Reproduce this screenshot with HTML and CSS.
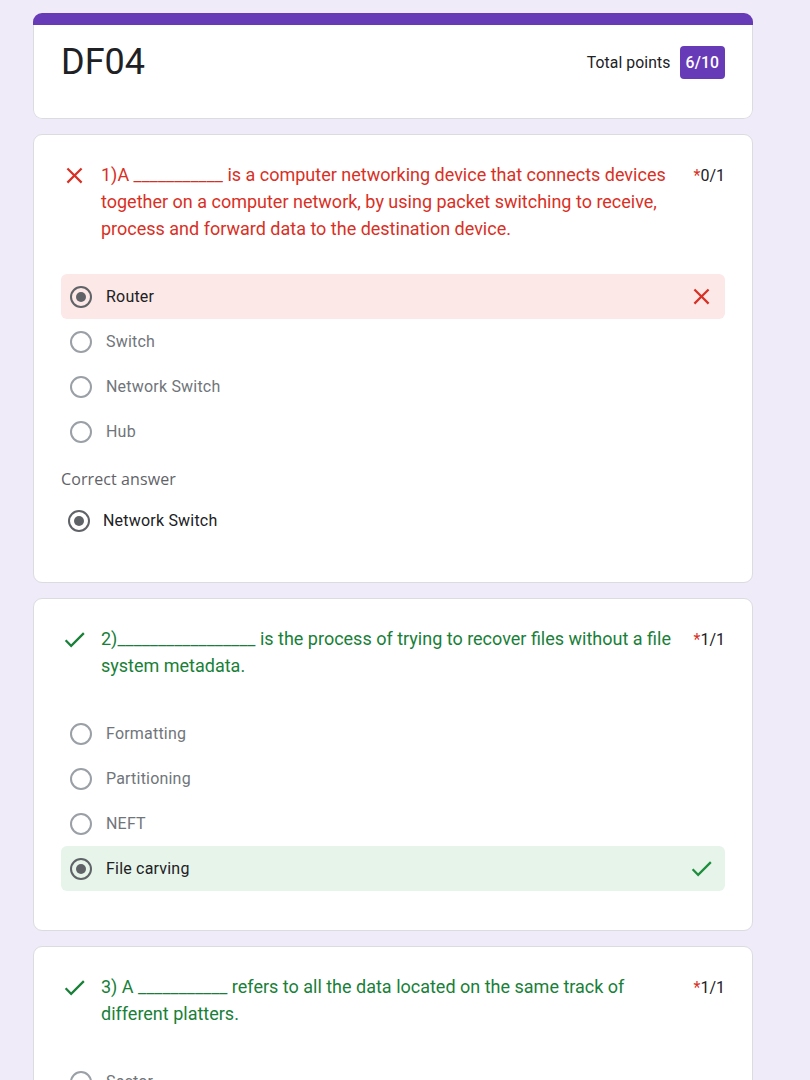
FILE: index.html
```html
<!DOCTYPE html>
<html lang="en">
<head>
<meta charset="utf-8">
<title>DF04</title>
<link rel="stylesheet" href="styles.css">
</head>
<body>
<div class="page">
  <div class="header">
    <div class="header-bar"></div>
    <div class="header-body">
      <h1 class="title">DF04</h1>
      <div class="total">Total points <span class="badge">6/10</span></div>
    </div>
  </div>

  <div class="card">
    <div class="q-head wrong">
      <span class="q-icon"><svg viewBox="0 0 24 24" width="27" height="27"><path fill="currentColor" d="M19 6.41L17.59 5 12 10.59 6.41 5 5 6.41 10.59 12 5 17.59 6.41 19 12 13.41 17.59 19 19 17.59 13.41 12z"/></svg></span>
      <div class="q-text">1)A ___________ is a computer networking device that connects devices together on a computer network, by using packet switching to receive, process and forward data to the destination device.</div>
      <div class="q-points"><span class="req">*</span>0/1</div>
    </div>
    <div class="options">
      <div class="option selected bad"><span class="radio checked"></span><span class="opt-label">Router</span><span class="opt-mark bad-mark"><svg viewBox="0 0 24 24" width="27" height="27"><path fill="currentColor" d="M19 6.41L17.59 5 12 10.59 6.41 5 5 6.41 10.59 12 5 17.59 6.41 19 12 13.41 17.59 19 19 17.59 13.41 12z"/></svg></span></div>
      <div class="option"><span class="radio"></span><span class="opt-label">Switch</span></div>
      <div class="option"><span class="radio"></span><span class="opt-label">Network Switch</span></div>
      <div class="option"><span class="radio"></span><span class="opt-label">Hub</span></div>
    </div>
    <div class="correct-label">Correct answer</div>
    <div class="option selected answer"><span class="radio checked"></span><span class="opt-label">Network Switch</span></div>
  </div>

  <div class="card">
    <div class="q-head right">
      <span class="q-icon"><svg viewBox="0 0 24 24" width="27" height="27"><path fill="currentColor" d="M9 16.17L4.83 12l-1.42 1.41L9 19 21 7l-1.41-1.41z"/></svg></span>
      <div class="q-text">2)_________________ is the process of trying to recover files without a file system metadata.</div>
      <div class="q-points"><span class="req">*</span>1/1</div>
    </div>
    <div class="options">
      <div class="option"><span class="radio"></span><span class="opt-label">Formatting</span></div>
      <div class="option"><span class="radio"></span><span class="opt-label">Partitioning</span></div>
      <div class="option"><span class="radio"></span><span class="opt-label">NEFT</span></div>
      <div class="option selected good"><span class="radio checked"></span><span class="opt-label">File carving</span><span class="opt-mark good-mark"><svg viewBox="0 0 24 24" width="27" height="27"><path fill="currentColor" d="M9 16.17L4.83 12l-1.42 1.41L9 19 21 7l-1.41-1.41z"/></svg></span></div>
    </div>
  </div>

  <div class="card">
    <div class="q-head right">
      <span class="q-icon"><svg viewBox="0 0 24 24" width="27" height="27"><path fill="currentColor" d="M9 16.17L4.83 12l-1.42 1.41L9 19 21 7l-1.41-1.41z"/></svg></span>
      <div class="q-text">3) A ___________ refers to all the data located on the same track of different platters.</div>
      <div class="q-points"><span class="req">*</span>1/1</div>
    </div>
    <div class="options">
      <div class="option"><span class="radio"></span><span class="opt-label">Sector</span></div>
      <div class="option"><span class="radio"></span><span class="opt-label">Cluster</span></div>
      <div class="option selected good"><span class="radio checked"></span><span class="opt-label">Cylinder</span><span class="opt-mark good-mark"><svg viewBox="0 0 24 24" width="27" height="27"><path fill="currentColor" d="M9 16.17L4.83 12l-1.42 1.41L9 19 21 7l-1.41-1.41z"/></svg></span></div>
      <div class="option"><span class="radio"></span><span class="opt-label">Track</span></div>
    </div>
  </div>
</div>
</body>
</html>
```

FILE: styles.css
```css
* { box-sizing: border-box; }

html, body {
  margin: 0;
  background: #f0ebf8;
  font-family: Roboto, "Liberation Sans", Arial, sans-serif;
  color: #202124;
}

.page {
  width: 720px;
  margin-left: 33px;
  padding-top: 13px;
  padding-bottom: 20px;
}

.header {
  border-radius: 9px;
  overflow: hidden;
}

.header-bar {
  height: 12px;
  background: #673ab7;
}

.header-body {
  background: #fff;
  border: 1px solid #dadce0;
  border-top: none;
  border-radius: 0 0 9px 9px;
  padding: 15px 27px 34px;
  display: flex;
  align-items: center;
  justify-content: space-between;
}

.title {
  margin: 0;
  font-size: 36px;
  font-weight: 400;
  line-height: 44px;
  color: #202124;
}

.total {
  display: flex;
  align-items: center;
  gap: 9px;
  font-size: 15.75px;
  color: #202124;
  letter-spacing: 0.1px;
}

.badge {
  background: #673ab7;
  color: #fff;
  border-radius: 4px;
  height: 33px;
  padding: 0 6px;
  display: flex;
  align-items: center;
  font-weight: 500;
  margin-top: 1px;
}

.card {
  background: #fff;
  border: 1px solid #dadce0;
  border-radius: 9px;
  margin-top: 15px;
  padding: 27px 27px 39px;
}

.q-head {
  display: flex;
  align-items: flex-start;
  font-size: 18px;
  line-height: 27px;
  letter-spacing: 0;
}

.q-head.wrong .q-icon, .q-head.wrong .q-text { color: #d93025; }
.q-head.right .q-icon, .q-head.right .q-text { color: #188038; }

.q-icon {
  flex: none;
  width: 27px;
  height: 27px;
  display: flex;
  margin-right: 13px;
}

.q-icon svg { display: block; }

.q-text {
  flex: 1;
  margin-top: -1px;
}

.q-points {
  flex: none;
  margin-left: 12px;
  font-size: 16px;
  color: #202124;
}

.req { color: #d93025; }

.options {
  margin-top: 32px;
}

.option {
  display: flex;
  align-items: center;
  height: 45px;
  padding-left: 9px;
  padding-right: 10px;
  border-radius: 6px;
  font-size: 16px;
  letter-spacing: 0.2px;
  color: #70757a;
}

.option.selected { color: #202124; }
.option.bad { background: #fce8e6; }
.option.good { background: #e6f4ea; }

.option.answer {
  margin-top: 7px;
  padding-left: 7px;
}

.option.answer .opt-label { margin-left: 13px; }

.radio {
  flex: none;
  width: 22px;
  height: 22px;
  border: 2px solid #9aa0a6;
  border-radius: 50%;
  display: flex;
  align-items: center;
  justify-content: center;
}

.radio.checked { border-color: #5f6368; }

.radio.checked::after {
  content: "";
  width: 10px;
  height: 10px;
  border-radius: 50%;
  background: #5f6368;
}

.opt-label { margin-left: 14px; }

.opt-mark {
  margin-left: auto;
  display: flex;
  width: 27px;
  height: 27px;
}

.bad-mark { color: #d93025; }
.good-mark { color: #1e8e3e; }

.correct-label {
  margin-top: 13px;
  font-family: "Open Sans", Roboto, sans-serif;
  font-size: 16px;
  line-height: 24px;
  font-weight: 500;
  color: #5f6368;
  letter-spacing: 0.1px;
}
```
